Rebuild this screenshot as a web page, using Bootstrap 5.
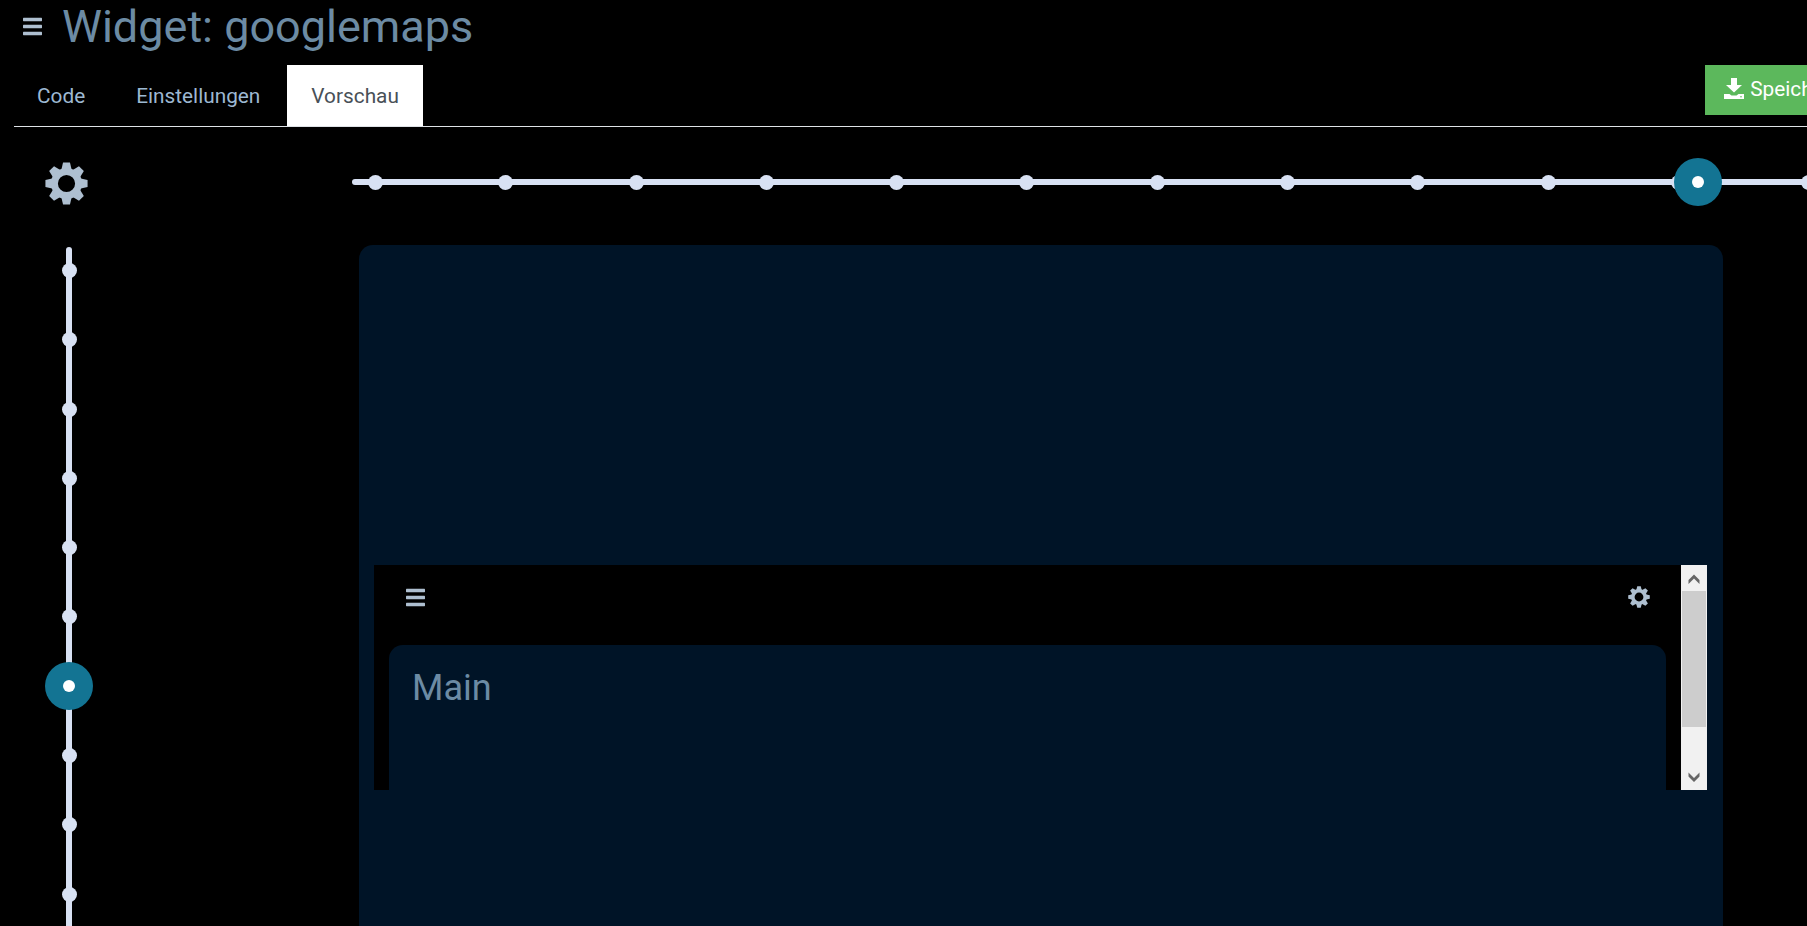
<!DOCTYPE html>
<html lang="de">
<head>
  <meta charset="UTF-8">
  <title>Widget: googlemaps</title>
  <link href="https://cdn.jsdelivr.net/npm/bootstrap@5.3.0/dist/css/bootstrap.min.css" rel="stylesheet">
  <style>
    html, body {
      height: 100%;
      overflow: hidden;
    }
    body {
      background-color: #000;
      font-family: Roboto, "Liberation Sans", sans-serif;
      color: #aebfd0;
    }
    .seite {
      width: 1900px;
      padding: 0 0 0 14px;
    }
    .kopf {
      height: 65px;
      padding-left: 9px;
      gap: 20px;
    }
    .kopf h1 {
      margin: 0;
      font-size: 45px;
      font-weight: 400;
      line-height: 54px;
      color: #6c8ba4;
    }
    .menue-icon {
      width: 19px;
      height: 19px;
      fill: #aebfd0;
      flex: none;
    }
    .kopf .menue-icon {
      margin-top: 17px;
    }
    .reiter {
      width: 1793px;
      height: 62px;
      border-bottom: 1px solid #dee2e6;
    }
    .reiter .nav-item {
      margin-right: 3px;
    }
    .reiter .nav-item:first-child {
      margin-left: -1px;
    }
    .reiter .nav-link {
      height: 61px;
      padding: 0 24px;
      border-radius: 0;
      border: 0;
      margin: 0;
      font-size: 20.8px;
      line-height: 63px;
      color: #9db8d2;
      background: none;
    }
    .reiter .nav-link.active {
      color: #495057;
      background: #fff;
    }
    .speichern {
      position: absolute;
      left: 1705px;
      top: 65px;
      width: 190px;
      height: 50px;
      padding: 0 0 0 19px;
      border: 0;
      border-radius: 0;
      background: #5cb85c;
      color: #fff;
      font-size: 20.8px;
      text-align: left;
    }
    .speichern svg {
      width: 20px;
      height: 21px;
      margin-right: 1px;
      fill: #fff;
      vertical-align: -3px;
    }
    .inhalt {
      padding-top: 29px;
    }
    .spalte-links {
      width: 338px;
      flex: none;
    }
    .zahnrad {
      width: 43px;
      height: 43px;
      margin: 6px 0 0 31px;
      display: block;
      fill: #aebfd0;
    }
    .h-regler {
      width: 1500px;
      height: 6px;
      margin: 23px 0 0 0;
      padding-left: 16px;
      gap: 115.3px;
      border-radius: 3px;
      background: #d8e1f3;
      position: relative;
    }
    .v-regler {
      width: 6px;
      height: 700px;
      margin: 42px 0 0 52px;
      padding-top: 16px;
      gap: 54.3px;
      border-radius: 3px;
      background: #d8e1f3;
      position: relative;
    }
    .punkt {
      width: 15px;
      height: 15px;
      flex: none;
      border-radius: 50%;
      background: #d8e1f3;
    }
    .h-regler .griff {
      position: absolute;
      left: 1322px;
      top: -21px;
    }
    .v-regler .griff {
      position: absolute;
      left: -21px;
      top: 415px;
    }
    .griff {
      width: 48px;
      height: 48px;
      border-radius: 50%;
      background: #137493;
    }
    .griff::after {
      content: "";
      width: 12px;
      height: 12px;
      border-radius: 50%;
      background: #fff;
    }
    .vorschau {
      width: 1364px;
      height: 900px;
      margin: 60px 0 0 7px;
      padding: 320px 16px 0 15px;
      border-radius: 14px;
      background: #001427;
    }
    .rahmen {
      height: 225px;
      background: #000;
      overflow: hidden;
    }
    .rahmen-inhalt {
      flex: 1;
      min-width: 0;
    }
    .rahmen-kopf {
      height: 80px;
      padding: 23px 31px 0 32px;
    }
    .rahmen-kopf .klein-rad {
      width: 22px;
      height: 22px;
      fill: #aebfd0;
      margin-top: -2px;
    }
    .haupt {
      height: 300px;
      margin: 0 15px;
      padding: 22px 23px;
      border-radius: 14px;
      background: #001427;
    }
    .haupt h2 {
      margin: 0;
      font-size: 36px;
      font-weight: 400;
      line-height: 43px;
      color: #6c8ba4;
    }
    .rollbalken {
      width: 26px;
      flex: none;
      background: #f1f1f1;
    }
    .rollbalken svg {
      width: 26px;
      height: 26px;
      flex: none;
      fill: #666;
    }
    .rollbalken-griff {
      height: 136px;
      margin: 0 1px;
      background: #cdcdcd;
    }
  </style>
</head>
<body>
  <svg width="0" height="0" class="d-block">
    <defs>
      <g id="rad">
        <polygon id="zahn" points="42,1 58,1 63,22 37,22"/>
        <use href="#zahn" transform="rotate(45 50 50)"/>
        <use href="#zahn" transform="rotate(90 50 50)"/>
        <use href="#zahn" transform="rotate(135 50 50)"/>
        <use href="#zahn" transform="rotate(180 50 50)"/>
        <use href="#zahn" transform="rotate(225 50 50)"/>
        <use href="#zahn" transform="rotate(270 50 50)"/>
        <use href="#zahn" transform="rotate(315 50 50)"/>
        <path fill-rule="evenodd" d="M50 14a36 36 0 1 0 0 72a36 36 0 1 0 0-72zM50 30a20 20 0 1 1 0 40a20 20 0 1 1 0-40z"/>
      </g>
    </defs>
  </svg>
  <div class="seite">
    <div class="kopf d-flex align-items-start">
      <svg class="menue-icon" viewBox="0 0 19 19"><rect width="19" height="3.4" y="0.8" rx="0.6"/><rect width="19" height="3.4" y="7.8" rx="0.6"/><rect width="19" height="3.4" y="14.8" rx="0.6"/></svg>
      <h1>Widget: googlemaps</h1>
    </div>
    <ul class="nav reiter">
      <li class="nav-item"><a class="nav-link" href="#">Code</a></li>
      <li class="nav-item"><a class="nav-link" href="#">Einstellungen</a></li>
      <li class="nav-item"><a class="nav-link active" href="#">Vorschau</a></li>
    </ul>
    <button class="btn speichern" type="button">
      <svg viewBox="0 0 20 21"><path d="M7 0h6v7h5l-8 7.5L2 7h5z"/><path fill-rule="evenodd" d="M0 16h5.5l2 1.5h5l2-1.5H20v5H0zM17 18a.8.8 0 1 0 0 1.600a.8.8 0 1 0 0-1.600z"/></svg>
      Speichern
    </button>
    <div class="inhalt d-flex">
      <div class="spalte-links">
        <svg class="zahnrad" viewBox="0 0 100 100"><use href="#rad"/></svg>
        <div class="v-regler d-flex flex-column align-items-center">
          <span class="punkt"></span><span class="punkt"></span><span class="punkt"></span><span class="punkt"></span><span class="punkt"></span><span class="punkt"></span><span class="punkt"></span><span class="punkt"></span><span class="punkt"></span><span class="punkt"></span>
          <span class="griff d-flex align-items-center justify-content-center"></span>
        </div>
      </div>
      <div>
        <div class="h-regler d-flex align-items-center">
          <span class="punkt"></span><span class="punkt"></span><span class="punkt"></span><span class="punkt"></span><span class="punkt"></span><span class="punkt"></span><span class="punkt"></span><span class="punkt"></span><span class="punkt"></span><span class="punkt"></span><span class="punkt"></span><span class="punkt"></span>
          <span class="griff d-flex align-items-center justify-content-center"></span>
        </div>
        <div class="vorschau">
          <div class="rahmen d-flex">
            <div class="rahmen-inhalt">
              <div class="rahmen-kopf d-flex justify-content-between">
                <svg class="menue-icon" viewBox="0 0 19 19"><rect width="19" height="3.4" y="0.8" rx="0.6"/><rect width="19" height="3.4" y="7.8" rx="0.6"/><rect width="19" height="3.4" y="14.8" rx="0.6"/></svg>
                <svg class="klein-rad" viewBox="0 0 100 100"><use href="#rad"/></svg>
              </div>
              <div class="haupt"><h2>Main</h2></div>
            </div>
            <div class="rollbalken d-flex flex-column">
              <svg viewBox="0 0 26 26"><path d="M13 9.500l5.500 5.500v4L13 13.500 7.500 19v-4z"/></svg>
              <div class="rollbalken-griff"></div>
              <div class="flex-grow-1"></div>
              <svg viewBox="0 0 26 26"><path d="M13 18l-5.500-5.500v-4L13 14l5.500-5.500v4z"/></svg>
            </div>
          </div>
        </div>
      </div>
    </div>
  </div>
  <script src="https://cdn.jsdelivr.net/npm/bootstrap@5.3.0/dist/js/bootstrap.bundle.min.js"></script>
</body>
</html>
